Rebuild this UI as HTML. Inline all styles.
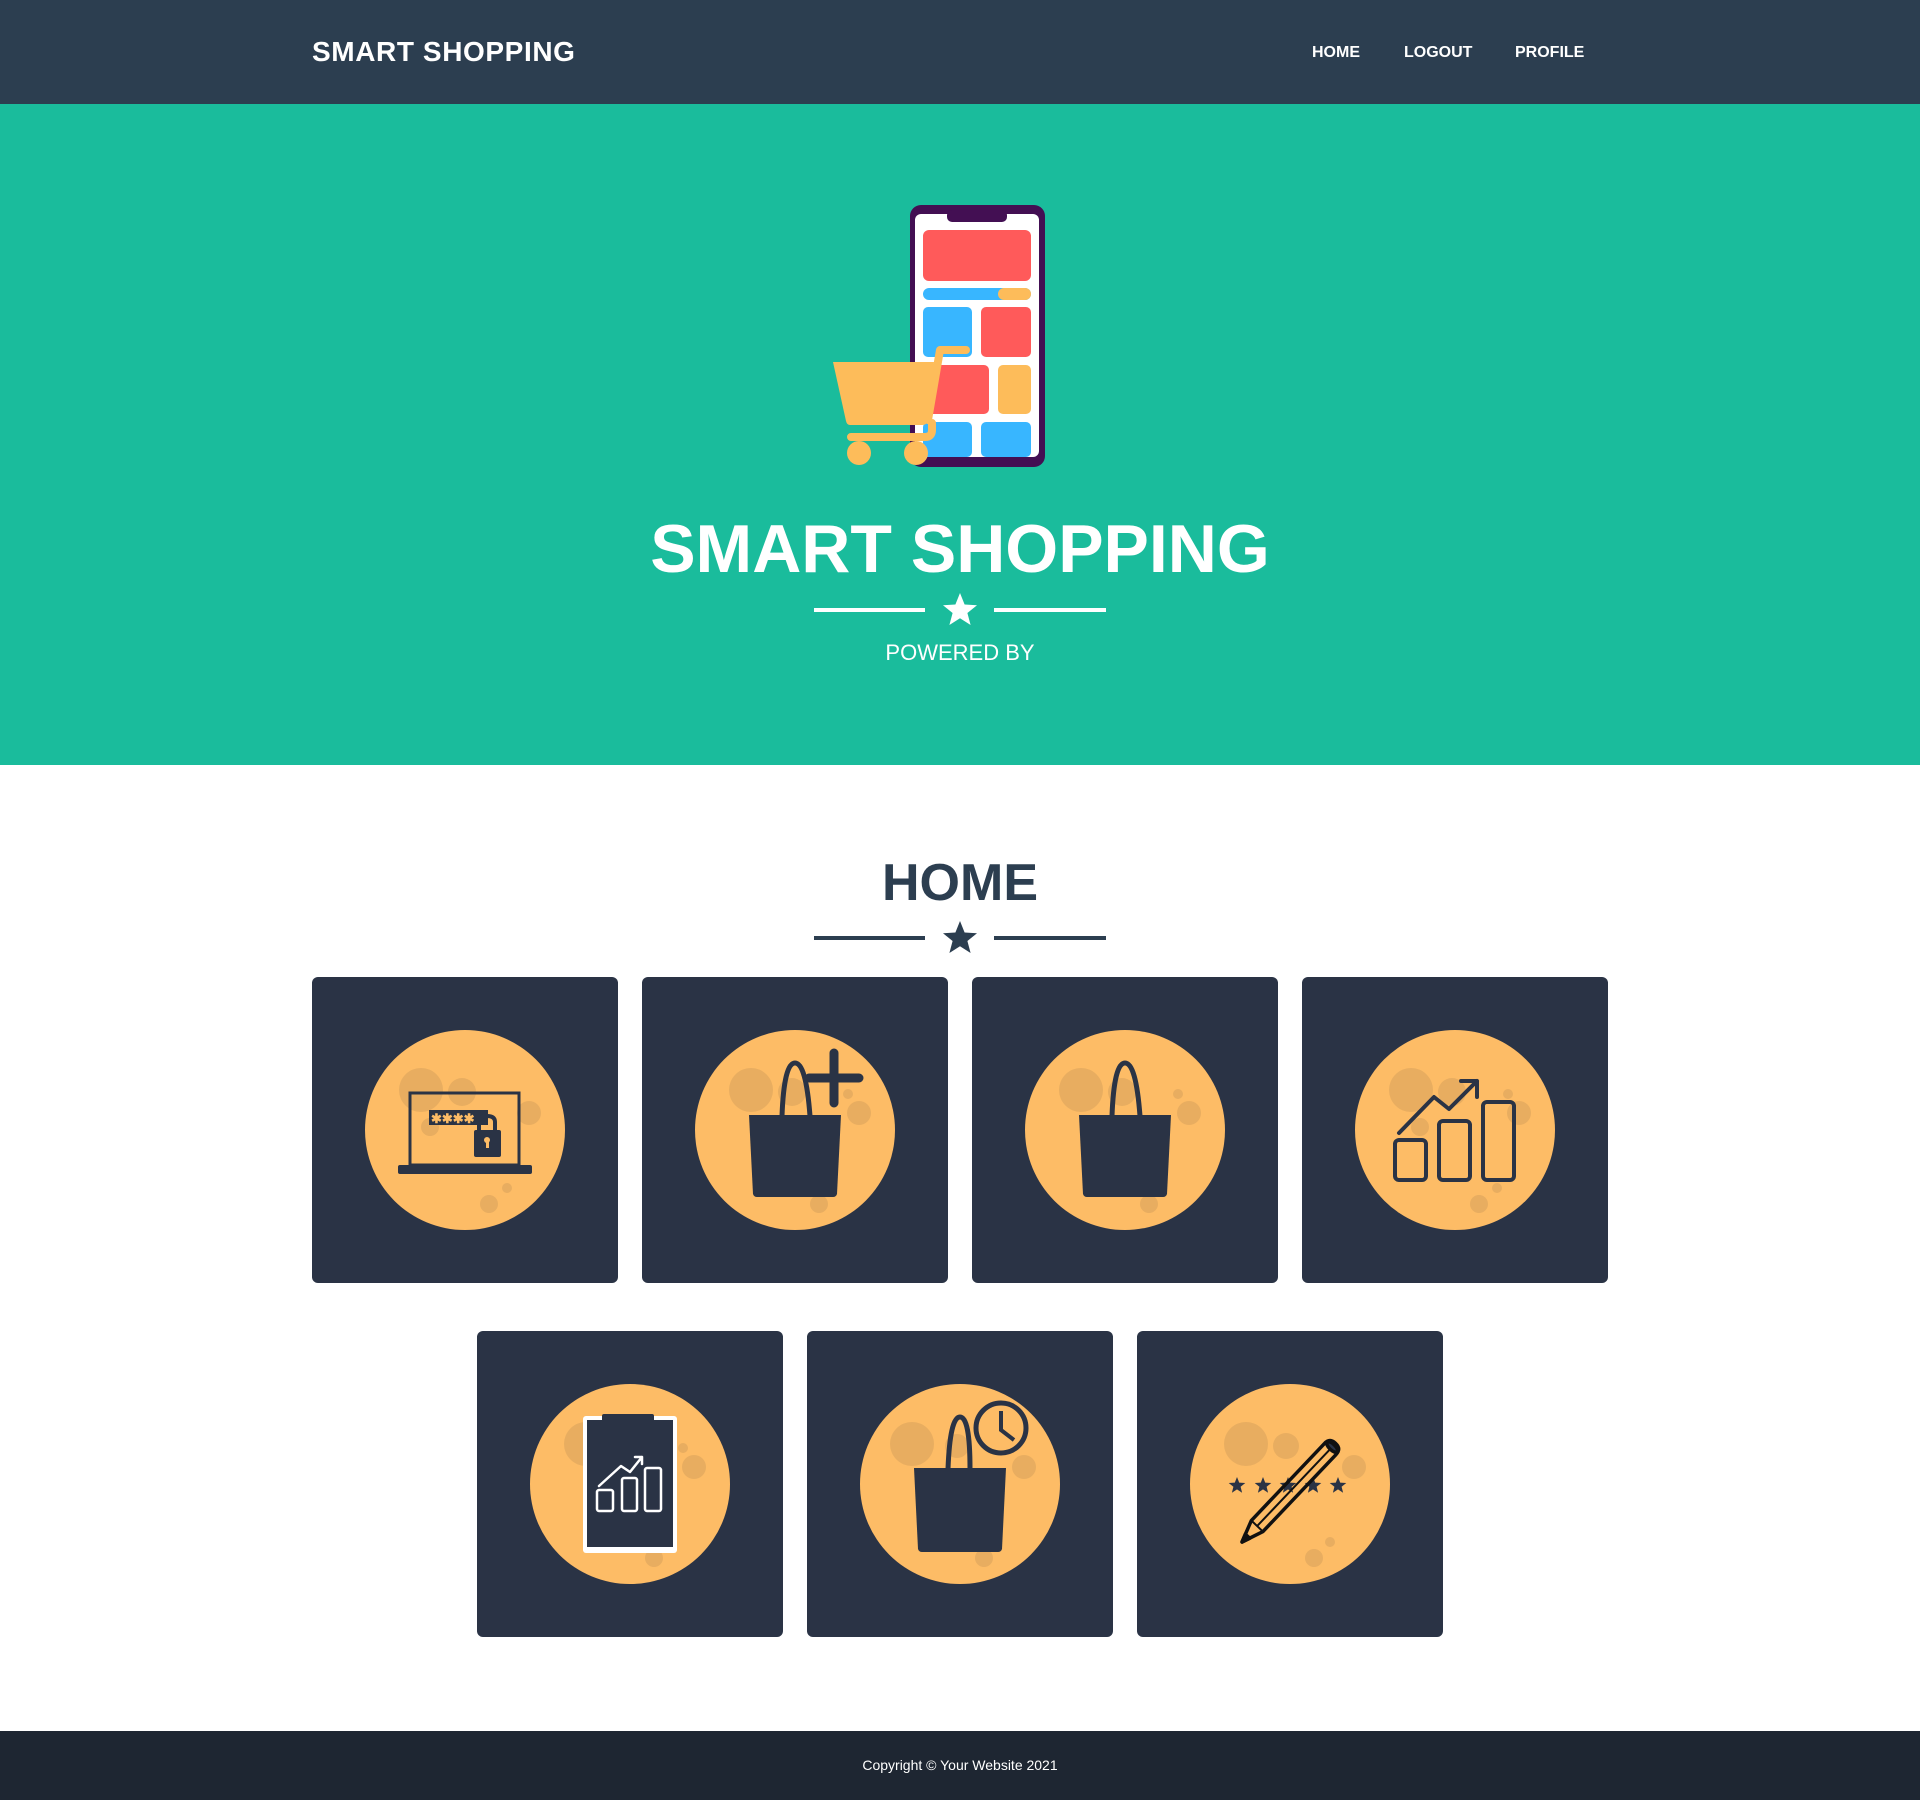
<!DOCTYPE html>
<html><head><meta charset="utf-8"><style>
*{margin:0;padding:0;box-sizing:border-box}
body{width:1920px;height:1803px;position:relative;background:#fff;font-family:"Liberation Sans",sans-serif;overflow:hidden}
.nav{position:absolute;left:0;top:0;width:1920px;height:104px;background:#2c3e50}
.brand{position:absolute;left:312px;top:36px;color:#fff;font-weight:bold;font-size:28px;letter-spacing:0.6px}
.nl{position:absolute;top:44px;color:#fff;font-weight:bold;font-size:16px}
.hero{position:absolute;left:0;top:104px;width:1920px;height:661px;background:#1abc9c}
.t{position:absolute;left:0;width:1920px;text-align:center;font-weight:bold}
.card{position:absolute;width:306px;height:306px;background:#2a3345;border-radius:6px}
.card svg{position:absolute;left:53px;top:53px}
.foot{position:absolute;left:0;top:1731px;width:1920px;height:69px;background:#1e2632;color:#fff;font-size:14px;text-align:center;line-height:69px}
</style></head><body>
<div class="nav">
<div class="brand">SMART SHOPPING</div>
<div class="nl" style="left:1312px">HOME</div>
<div class="nl" style="left:1404px">LOGOUT</div>
<div class="nl" style="left:1515px">PROFILE</div>
</div>
<div class="hero"></div>
<svg style="position:absolute;left:800px;top:190px" width="280" height="290" viewBox="800 190 280 290">
<rect x="910" y="205" width="135" height="262" rx="11" fill="#430f53"/>
<rect x="915" y="214" width="124" height="243" rx="6" fill="#fff"/>
<rect x="947" y="210" width="60" height="12" rx="5" fill="#430f53"/>
<rect x="923" y="230" width="108" height="51" rx="6" fill="#ff5a5a"/>
<rect x="923" y="288" width="108" height="12" rx="6" fill="#38b6ff"/>
<rect x="998" y="288" width="33" height="12" rx="6" fill="#fdbc5a"/>
<rect x="923" y="307" width="49" height="50" rx="5" fill="#38b6ff"/>
<rect x="981" y="307" width="50" height="50" rx="5" fill="#ff5a5a"/>
<rect x="923" y="365" width="66" height="49" rx="5" fill="#ff5a5a"/>
<rect x="998" y="365" width="33" height="49" rx="5" fill="#fdbc5a"/>
<rect x="923" y="422" width="49" height="35" rx="5" fill="#38b6ff"/>
<rect x="981" y="422" width="50" height="35" rx="5" fill="#38b6ff"/>
<path d="M833 362 L934 362 L928 420 Q927 425 922 425 L850 425 Q847 425 846 421 Z" fill="#fdbc5a"/>
<path d="M928 420 L940 350 L966 350" stroke="#fdbc5a" stroke-width="8" fill="none" stroke-linecap="round" stroke-linejoin="round"/>
<path d="M851 437 L925 437 Q932 437 932 430 L932 423" stroke="#fdbc5a" stroke-width="8" fill="none" stroke-linecap="round"/>
<circle cx="859" cy="453" r="12" fill="#fdbc5a"/><circle cx="916" cy="453" r="12" fill="#fdbc5a"/>
</svg>
<div class="t" style="top:510px;font-size:68px;color:#fff">SMART SHOPPING</div>
<svg style="position:absolute;left:814px;top:592px" width="292" height="36" viewBox="0 0 292 36">
<rect x="0" y="16" width="111" height="4" fill="#fff"/><rect x="180" y="16" width="112" height="4" fill="#fff"/>
<polygon points="146,1 150.6,12.5 163,13.2 153.4,21 156.6,33 146,26.3 135.4,33 138.6,21 129,13.2 141.4,12.5" fill="#fff"/>
</svg>
<div class="t" style="top:640px;font-size:22px;color:#fff;font-weight:normal">POWERED BY</div>
<div class="t" style="top:853px;font-size:52px;color:#2c3e50">HOME</div>
<svg style="position:absolute;left:814px;top:920px" width="292" height="36" viewBox="0 0 292 36">
<rect x="0" y="16" width="111" height="4" fill="#2c3e50"/><rect x="180" y="16" width="112" height="4" fill="#2c3e50"/>
<polygon points="146,1 150.6,12.5 163,13.2 153.4,21 156.6,33 146,26.3 135.4,33 138.6,21 129,13.2 141.4,12.5" fill="#2c3e50"/>
</svg>

<div class="card" style="left:312px;top:977px"><svg width="200" height="200" viewBox="0 0 200 200">
<circle cx="100" cy="100" r="100" fill="#fdbc66"/>
<g fill="#e8ad60"><circle cx="56" cy="60" r="22"/><circle cx="97" cy="62" r="14"/><circle cx="164" cy="83" r="12"/><circle cx="65" cy="97" r="9"/><circle cx="124" cy="174" r="9"/><circle cx="142" cy="158" r="5"/></g>
<rect x="45" y="63" width="109" height="72" fill="none" stroke="#2a3345" stroke-width="3"/>
<rect x="33" y="135" width="134" height="9" rx="2" fill="#2a3345"/>
<rect x="64" y="80" width="59" height="15" fill="#2a3345"/>
<text x="66" y="93" font-size="13" fill="#fdbc66" font-family="Liberation Sans" font-weight="bold">✱✱✱✱</text>
<path d="M114 100 V92 Q114 86 122 86 Q130 86 130 92 V100" stroke="#2a3345" stroke-width="4" fill="none"/>
<rect x="109" y="100" width="27" height="27" rx="2" fill="#2a3345"/>
<circle cx="122" cy="110" r="3" fill="#fdbc66"/><rect x="121" y="110" width="3" height="8" fill="#fdbc66"/>
</svg></div>

<div class="card" style="left:642px;top:977px"><svg width="200" height="200" viewBox="0 0 200 200">
<circle cx="100" cy="100" r="100" fill="#fdbc66"/>
<g fill="#e8ad60"><circle cx="56" cy="60" r="22"/><circle cx="97" cy="62" r="14"/><circle cx="164" cy="83" r="12"/><circle cx="153" cy="64" r="5"/><circle cx="124" cy="174" r="9"/></g>
<path d="M54 85 L146 85 L142 164 Q141 167 138 167 L62 167 Q59 167 58 164 Z" fill="#2a3345"/>
<path d="M87 86 Q89 33 100 33 Q111 33 115 86" stroke="#2a3345" stroke-width="5" fill="none"/>
<path d="M139 23 V73 M114 48 H164" stroke="#2a3345" stroke-width="9" stroke-linecap="round"/>
</svg></div>

<div class="card" style="left:972px;top:977px"><svg width="200" height="200" viewBox="0 0 200 200">
<circle cx="100" cy="100" r="100" fill="#fdbc66"/>
<g fill="#e8ad60"><circle cx="56" cy="60" r="22"/><circle cx="97" cy="62" r="14"/><circle cx="164" cy="83" r="12"/><circle cx="153" cy="64" r="5"/><circle cx="124" cy="174" r="9"/></g>
<path d="M54 85 L146 85 L142 164 Q141 167 138 167 L62 167 Q59 167 58 164 Z" fill="#2a3345"/>
<path d="M87 86 Q89 33 100 33 Q111 33 115 86" stroke="#2a3345" stroke-width="5" fill="none"/>
</svg></div>

<div class="card" style="left:1302px;top:977px"><svg width="200" height="200" viewBox="0 0 200 200">
<circle cx="100" cy="100" r="100" fill="#fdbc66"/>
<g fill="#e8ad60"><circle cx="56" cy="60" r="22"/><circle cx="97" cy="62" r="14"/><circle cx="164" cy="83" r="12"/><circle cx="153" cy="64" r="5"/><circle cx="124" cy="174" r="9"/><circle cx="65" cy="97" r="9"/><circle cx="142" cy="158" r="5"/></g>
<g fill="none" stroke="#2a3345" stroke-width="4" stroke-linecap="round" stroke-linejoin="round">
<rect x="40" y="110" width="31" height="40" rx="4"/><rect x="84" y="91" width="31" height="59" rx="4"/><rect x="128" y="72" width="31" height="78" rx="4"/>
<path d="M44 103 L79 67 L94 79 L122 51 M106 51 H122 V67"/></g>
</svg></div>

<div class="card" style="left:477px;top:1331px"><svg width="200" height="200" viewBox="0 0 200 200">
<circle cx="100" cy="100" r="100" fill="#fdbc66"/>
<g fill="#e8ad60"><circle cx="56" cy="60" r="22"/><circle cx="164" cy="83" r="12"/><circle cx="153" cy="64" r="5"/><circle cx="124" cy="174" r="9"/></g>
<rect x="53" y="32" width="94" height="137" rx="3" fill="#fff"/>
<rect x="57" y="36" width="86" height="127" fill="#2a3345"/>
<rect x="72" y="30" width="52" height="8" rx="2" fill="#2a3345"/>
<g fill="none" stroke="#fff" stroke-width="2.5" stroke-linecap="round" stroke-linejoin="round">
<rect x="67" y="106" width="16" height="21" rx="2"/><rect x="92" y="94" width="15" height="33" rx="2"/><rect x="115" y="84" width="16" height="43" rx="2"/>
<path d="M69 102 L91 82 L100 88 L112 73 M105 73 H112 V80"/></g>
</svg></div>

<div class="card" style="left:807px;top:1331px"><svg width="200" height="200" viewBox="0 0 200 200">
<circle cx="100" cy="100" r="100" fill="#fdbc66"/>
<g fill="#e8ad60"><circle cx="52" cy="60" r="22"/><circle cx="97" cy="62" r="12"/><circle cx="164" cy="83" r="12"/><circle cx="124" cy="174" r="9"/></g>
<path d="M54 84 L146 84 L142 165 Q141 168 138 168 L62 168 Q59 168 58 165 Z" fill="#2a3345"/>
<path d="M88 85 Q90 33 100 33 Q110 33 110 85" stroke="#2a3345" stroke-width="5" fill="none"/>
<circle cx="141" cy="44" r="25" fill="#fdbc66" stroke="#2a3345" stroke-width="5"/>
<path d="M141 27 V46 L154 56" stroke="#2a3345" stroke-width="4" fill="none"/>
</svg></div>

<div class="card" style="left:1137px;top:1331px"><svg width="200" height="200" viewBox="0 0 200 200">
<circle cx="100" cy="100" r="100" fill="#fdbc66"/>
<g fill="#e8ad60"><circle cx="56" cy="60" r="22"/><circle cx="96" cy="62" r="13"/><circle cx="164" cy="83" r="12"/><circle cx="124" cy="174" r="9"/><circle cx="140" cy="158" r="5"/></g>
<g fill="#2a3345">
<polygon points="47,93 49.2,98.6 55.3,99 50.6,102.8 52.1,108.8 47,105.4 41.9,108.8 43.4,102.8 38.7,99 44.8,98.6"/>
<polygon points="73,93 75.2,98.6 81.3,99 76.6,102.8 78.1,108.8 73,105.4 67.9,108.8 69.4,102.8 64.7,99 70.8,98.6"/>
<polygon points="98,93 100.2,98.6 106.3,99 101.6,102.8 103.1,108.8 98,105.4 92.9,108.8 94.4,102.8 89.7,99 95.8,98.6"/>
<polygon points="123,93 125.2,98.6 131.3,99 126.6,102.8 128.1,108.8 123,105.4 117.9,108.8 119.4,102.8 114.7,99 120.8,98.6"/>
<polygon points="148,93 150.2,98.6 156.3,99 151.6,102.8 153.1,108.8 148,105.4 142.9,108.8 144.4,102.8 139.7,99 145.8,98.6"/>
</g>
<g transform="translate(52,158) rotate(-46.5)" fill="none" stroke="#111" stroke-width="3.5" stroke-linejoin="round">
<path d="M0 0 L22 -8 L128 -8 Q136 -8 136 0 Q136 8 128 8 L22 8 Z"/>
<path d="M22 0 L128 0 M22 -8 L22 8" stroke-width="2"/>
<path d="M0 0 L8 -3 L8 3 Z" fill="#111"/>
<ellipse cx="131" cy="0" rx="3" ry="7" fill="#2a3345"/>
</g>
</svg></div>

<div class="foot">Copyright © Your Website 2021</div>
</body></html>
